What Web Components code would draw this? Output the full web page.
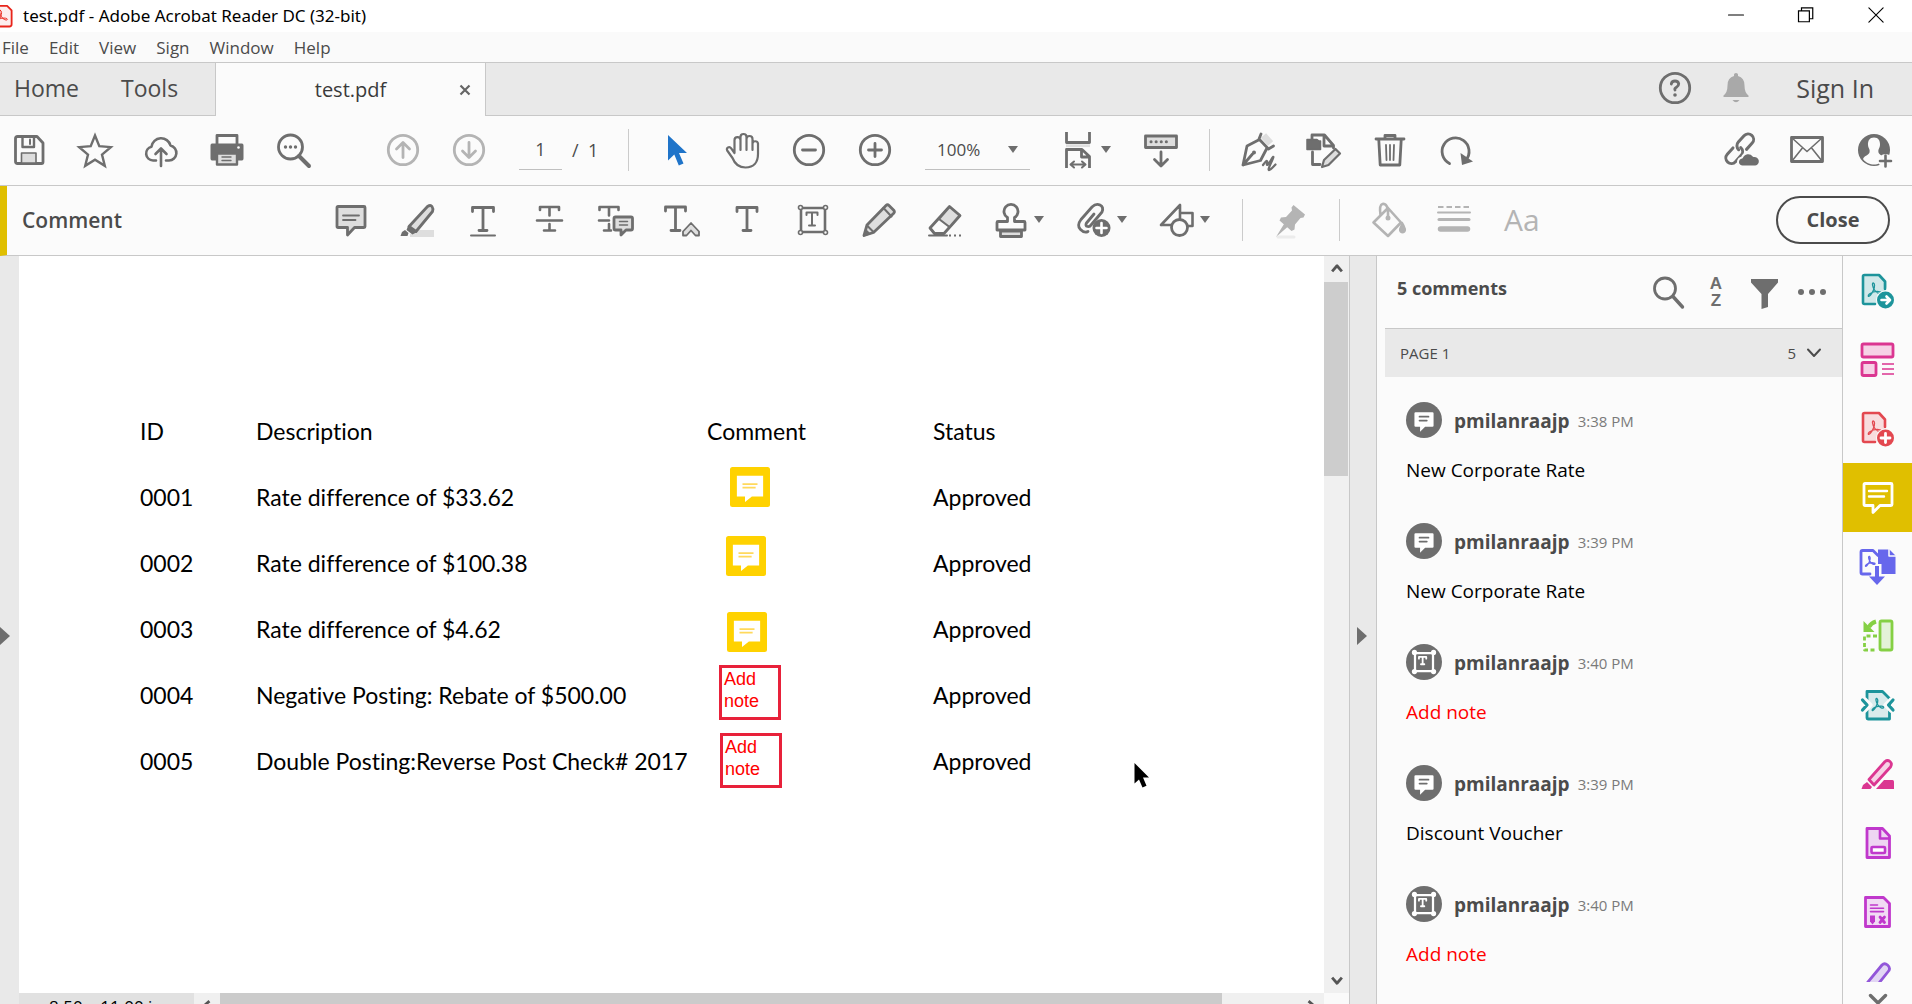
<!DOCTYPE html>
<html lang="en">
<head>
<meta charset="utf-8">
<title>test.pdf - Adobe Acrobat Reader DC (32-bit)</title>
<style>
  html, body { margin: 0; height: 100%; overflow: hidden; }
  body { font-family: "Open Sans", "Noto Sans", sans-serif; color: #4b4b4b; background: #fff; }
</style>
</head>
<body>
<reader-app></reader-app>
<script>
const BASE = `
  *, *::before { box-sizing: border-box; }
  button { font: inherit; color: inherit; background: none; border: 0; padding: 0; margin: 0; display: flex; align-items: center; }
  ul { list-style: none; margin: 0; padding: 0; }
  a { color: inherit; text-decoration: none; }
`;
const define = (name, css, html) => customElements.define(name, class extends HTMLElement {
  constructor() {
    super();
    this.attachShadow({ mode: "open" }).innerHTML = `<style>${BASE}${css}</style>${html}`;
  }
});

/* Icon set: 32-unit artboard, drawn in currentColor; --tint is the soft fill. */
const T = (x, y, w, h, s = 2.4) =>
  `<path d="M${x} ${y + 4}v-4h${w}v4M${x + w / 2} ${y}v${h}M${x + w / 2 - 4} ${y + h}h8" stroke-width="${s}"/>`;
const A = (x, y, k = 1) =>
  `<path transform="translate(${x} ${y}) scale(${k})" stroke-width="${1.3 / k}" d="M6.500 .5C4.800 0 5.300 4 7.500 7.500S13.500 12 14 10.500 10 8.500 6.500 9.500 .8 12.700 1.300 13.700 5 11.500 6.500 7.500 8 1.500 6.500 .5z"/>`;
const FRAME = `<path d="M4 4h24v24H4z" stroke-width="2.600"/>
  <g fill="var(--hole,#fbfbfb)" stroke-width="1.600"><circle cx="3.500" cy="3.500" r="2"/><circle cx="28.500" cy="3.500" r="2"/><circle cx="3.500" cy="28.500" r="2"/><circle cx="28.500" cy="28.500" r="2"/></g>`;
const ICONS = {
  save: `<path d="M4.500 2.500H24l6 6.500v19q0 1.500-1.500 1.500h-24q-2 0-2-2v-23q0-2 2-2z"/><path d="M9.500 3v10H21V3" stroke-width="2.400"/><path d="M17 5.500v4.500" stroke-width="2"/><path d="M8.500 19h14.500v10H8.500z" fill="var(--tint)" stroke-width="1.600"/>`,
  star: `<path d="M16 1.500l4.300 10.700 11.500.9-8.800 7.500 2.800 11.200L16 25.700 6.200 31.800 9 20.600.2 13.100l11.500-.9z" stroke-width="2.400" stroke-linejoin="miter"/>`,
  cloud: `<path d="M11 26.500H8A7 7 0 0 1 6.500 12.700 9.700 9.700 0 0 1 25.500 11.500 7.600 7.600 0 0 1 24 26.500h-3M16 32V15M10.500 20L16 14.500l5.500 5.500" stroke-width="2.600"/>`,
  print: `<path d="M6 10V1.500h20V10" /><path d="M1 9.500h30q1.500 0 1.500 2v13q0 2-1.500 2h-4V19H5v7.500H1q-1.500 0-1.500-2v-13q0-2 1.500-2z" fill="currentColor" stroke="none"/><path d="M6 19.500h20v11H6z" fill="var(--tint)" stroke-width="2.400"/><path d="M11 23h9M11 26.500h9" stroke-width="1.400"/><circle cx="27.500" cy="13.500" r="1.300" fill="#fff" stroke="none"/>`,
  find: `<circle cx="13.500" cy="13" r="12"/><path d="M22 22l10 10" stroke-width="4"/><g fill="currentColor" stroke="none"><circle cx="8.500" cy="13" r="1.700"/><circle cx="13.500" cy="13" r="1.700"/><circle cx="18.500" cy="13" r="1.700"/></g>`,
  up: `<circle cx="16" cy="16" r="14.700"/><path d="M16 23.500V9M9.500 15L16 8.500l6.500 6.500"/>`,
  down: `<circle cx="16" cy="16" r="14.700"/><path d="M16 8.500V23M9.500 17L16 23.500l6.500-6.500"/>`,
  arrow: `<path d="M7 1v25.500l6.300-6 4.500 11 4.700-2-4.500-10.500H26z" fill="currentColor" stroke="none"/>`,
  hand: `<path stroke-width="2.200" d="M7.500 19V6.200a3 3 0 0 1 6 0V16M13.500 8V3a3 3 0 0 1 6 0v13M19.500 5a3 3 0 0 1 6 0v11M25.500 9.500a2.800 2.800 0 0 1 5.500 0V20c0 8-4 13.500-12.500 13.500-7 0-10.500-3-13-9.500L.2 16.500c-1.500-3 2.300-4.500 4-2.200L7.500 19"/>`,
  minus: `<circle cx="16" cy="16" r="14.700"/><path d="M9.500 16h13"/>`,
  plus: `<circle cx="16" cy="16" r="14.700"/><path d="M9.500 16h13M16 9.500v13"/>`,
  fit: `<path d="M4.500-2V8.500h23V-2" stroke-linecap="butt"/><path d="M4 11.700h24" stroke="var(--tint)" stroke-linecap="butt"/><path d="M4.500 34V15.500H20l7.500 7V34M19.500 16v7h8" stroke-linecap="butt"/><path d="M9 30.500h14M12 27.500l-3.500 3 3.500 3M20 27.500l3.500 3-3.500 3" stroke-width="2"/>`,
  scroll: `<path d="M.5 2h31v11.500H.5z" fill="var(--tint)"/><path d="M6 7.700h20" stroke-dasharray=".1 5" stroke-width="3"/><path d="M16 18v13M9.500 25.500L16 32l6.500-6.500"/>`,
  sign: `<path d="M21.500 1.500l7 8" stroke="var(--tint)" stroke-width="7" stroke-linecap="butt"/><path d="M17.500 5.500L5 12 1 31l17.500-4.500L25 14M1 31l9.500-11M19 0l-2 5 9.500 10 5-3" stroke-width="2.800"/><circle cx="12" cy="18.500" r="2" fill="currentColor" stroke="none"/><path d="M21 31q5-7 4-2t4-3-.5 4 5 .500" stroke-width="2.200"/>`,
  edit: `<path d="M4 5V1h12.500l9 10.500V14M16 2v10h9M4.500 18v12.500H12"/><path d="M-1 5.500h10l2 1.500h1.500v8.500H-1z" fill="currentColor" stroke-width="1.500"/><path d="M14 33l2-7L27.500 15l4.500 4.500L20.500 31z" fill="var(--tint)" stroke-width="2.200"/>`,
  trash: `<path d="M2 5h28M11 4.500V1.500h10v3M4.800 6l1.400 25h19.600L27.200 6"/><path d="M12 11l.5 15M16 11v15M20 11l-.5 15" stroke-width="1.800"/>`,
  rotate: `<path d="M9.500 29.500A13.500 13.500 0 1 1 26 26"/><path d="M20.500 19l1.500 12 11-3.500z" fill="currentColor" stroke="none"/>`,
  link: `<g transform="rotate(-48 15 14)" stroke-width="3"><path d="M11 9.500H2.500a5.500 5.500 0 0 0 0 11H11a5.500 5.500 0 0 0 5.500-5.500"/><path d="M19 20.500h8.500a5.500 5.500 0 0 0 0-11H19a5.500 5.500 0 0 0-5.500 5.500"/></g><path d="M19 32.500a4.500 4.500 0 0 1-1-9 6.500 6.500 0 0 1 11.500-1.500 5.200 5.200 0 0 1 2 10.500z" fill="currentColor" stroke="#fbfbfb" stroke-width="2"/>`,
  mail: `<path d="M.5 3.500h31v24H.5z"/><path d="M1 4l15 13.500L31 4M1 27l10-12.500M31 27L21 14.500" stroke-width="1.600"/>`,
  person: `<circle cx="16" cy="16" r="16" fill="currentColor" stroke="none"/><path d="M16 3.500c-4.500 0-6.300 3.500-6 7.500.3 3.500 2.300 4 1.500 7.500-.5 2.500-5 3-6.500 6.500 3 4 7 5.500 11 5.500s8-1.500 10.500-5.500c-1-3.500-5.500-4-6-6.500-.6-3.500 1.200-4 1.500-7.500.3-4-1.500-7.500-6-7.500z" fill="#fbfbfb" stroke="none"/><circle cx="27.500" cy="27" r="7" fill="#fbfbfb" stroke="none"/><path d="M27.500 21.500v11M22 27h11" stroke-width="2.600"/>`,
  note: `<path d="M3 2.500h26q1 0 1 1v19q0 1-1 1H19.500l-7 7.500v-7.500H3q-1 0-1-1v-19q0-1 1-1z" fill="var(--tint)"/><path d="M8 11.500h16M8 16h12.500" stroke-width="1.800"/>`,
  highlight: `<path d="M9 33V30l9-4h15v7z" fill="var(--tint)" stroke="none"/><path d="M8 22.500L26.500 2.500q3-2 4.500 0t.5 5L15 27.500z" fill="var(--tint)"/><path d="M7 22l9 6-4.500 2.500L5.500 26zM1 28l3-2 3.500 3-1 3H-.500z" fill="currentColor" stroke="none"/>`,
  underline: T(5.500, 3.500, 21, 23, 2.800) + `<path d="M4 31.500h24" stroke-width="2"/>`,
  strike: `<path d="M7 6V3h19v3M16.500 3v8.500M16.500 20v6.500M11 26.500h11M4 16.500h25" stroke-width="2.600"/>`,
  replace: `<path d="M.500 6V3h19v3M10 3v8.500M10 20v6.500M5 26.500h7M0 16.500h10" stroke-width="2.600"/><path d="M16.500 13h15.500q1.500 0 1.500 1.500v10q0 1.500-1.500 1.500h-5l-5 5v-5h-5.500q-1.500 0-1.500-1.500v-10q0-1.500 1.500-1.500z" fill="var(--tint)"/><path d="M20.500 17.500h8M20.500 21h8" stroke-width="1.500"/>`,
  insert: `<path d="M.5 7V3h20v4M10.500 3v23M6 26.500h9" stroke-width="2.800"/><path d="M18 31.500v-4l8-8.500 8 8.500v4h-3.500L26 26.500l-4.500 5z" fill="var(--tint)" stroke-width="1.800"/>`,
  text: T(6, 3.500, 20, 23, 2.800),
  textbox: FRAME + `<path d="M9.500 11V8.500h11V11M15 8.500v13M12 21.500h6" stroke-width="2"/>`,
  pencil: `<path d="M1 31.500l3-10.500L23 1.500q1.500-1.500 3 0l5 5q1 1.500-.5 3L10.500 28.500z" fill="var(--tint)"/><path d="M20.500 4l8 8.500M4 21.500l6.500 6.500" stroke-width="2"/><path d="M0 33l3-8 5 5z" fill="currentColor" stroke="none"/>`,
  eraser: `<path d="M1 24L20.500 2.500l10.500 9L15 29.500H5.500z" fill="#fbfbfb"/><path d="M10 15L20.500 3l10 8.500L20.500 23z" fill="var(--tint)" stroke-width="2.200"/><path d="M0 31.500h18" stroke-width="2"/><path d="M20 31.500h12" stroke-width="2" stroke-dasharray="2 3" stroke-linecap="butt"/>`,
  stamp: `<path d="M3 17.500h9.500v-4a7 7 0 1 1 7 0v4H29q1 0 1 1V26H2v-7.500q0-1 1-1z"/><path d="M5.500 27h21v5.500h-21z" fill="var(--tint)"/>`,
  attach: `<path d="M16 10L8.500 19q-1.500 3 1 3.500t3.500-1.500L24 8q2-5-2-7t-8 2L3 15.500q-4.500 6-.5 10T10 27.500" stroke-width="2.800"/><circle cx="23.500" cy="24" r="9" fill="currentColor" stroke="none"/><path d="M18.500 24h10M23.500 19v10" stroke="#fff" stroke-width="2.600"/>`,
  shapes: `<path d="M0 21L19 1v13M0 21h11M19 9h12.500v13H27" stroke-width="2.600"/><circle cx="18.500" cy="23.500" r="8" fill="#fbfbfb"/>`,
  pin: `<path d="M18.500 1L30 10.500l-1.500 3-3 .5-5.500 6.500-.5 5-3 1.500-12-10.500 1.500-3 5-.5L17 6.500l-.5-3z M9 20l3.500 3L1 33z" fill="currentColor" stroke="none"/><path d="M3 33h16" stroke="#ececec" stroke-width="3"/>`,
  bucket: `<path d="M1.500 18.500L16 4l13 14.500-13 13.500zM16 14V5q-2-6-5.500-5T8.500 11" stroke-width="2.600"/><circle cx="16" cy="14" r="2.500" fill="currentColor" stroke="none"/><path d="M30.500 17.500q-5.500 8.500-2.500 11 2.500 2 5 0 3-2.500-2.500-11z" fill="currentColor" stroke="none"/>`,
  lines: `<path d="M0 3h32" stroke-width="1.800" stroke-dasharray="5.500 3" stroke-linecap="butt"/><path d="M0 8.500h32" stroke-width="2"/><path d="M1 15.500h30" stroke-width="3"/><path d="M2.500 25h27" stroke-width="5.500"/>`,
  help: `<circle cx="16" cy="16" r="14.700"/><path d="M12.300 12q.5-3 3.700-3t3.700 2.800q0 2.200-2.200 3.400T16 18" stroke-width="2.800"/><circle cx="16" cy="23" r="1.800" fill="currentColor" stroke="none"/>`,
  bell: `<path d="M14 2.500q0-1.500 2-1.500t2 1.500v1.500q6.500 1.500 6.500 9.500 0 7 4 10v1.500H3.500v-1.500q4-3 4-10 0-8 6.500-9.500zM12.500 28h7q-3.500 4.500-7 0z" fill="currentColor" stroke="none"/>`,
  search: `<circle cx="13" cy="12.500" r="10.500"/><path d="M21 20.500l9.500 10.500" stroke-width="3.400"/>`,
  filter: `<path d="M3 3h27v3.500L20 18v13l-6.500 2V18L3 6.500z" fill="currentColor" stroke="none"/>`,
  dots: `<g fill="currentColor" stroke="none"><circle cx="5" cy="16" r="3"/><circle cx="16" cy="16" r="3"/><circle cx="27" cy="16" r="3"/></g>`,
  chevron: `<path d="M10 12.500l6 6.500 6-6.500" stroke-width="2"/>`,
  arrowhead: `<path d="M10 13l6 7 6-7" stroke-width="3.400" stroke-linecap="butt"/>`,
  next: `<path d="M8.500 13.500l7.500 7.500 7.500-7.500" stroke-width="3.400"/>`,
  avatarNote: `<path d="M8.500 9h15q1 0 1 1v11q0 1-1 1H17l-4.500 4.500V22h-4q-1 0-1-1V10q0-1 1-1z" fill="#fff" stroke="none"/><path d="M12 13h8M12 16.500h6.500" stroke="#6e6e6e" stroke-width="1.500"/>`,
  avatarText: `<path d="M8 8h16v16H8z" stroke-width="2"/><g fill="#fff" stroke="none"><circle cx="7.500" cy="7.500" r="2.300"/><circle cx="24.500" cy="7.500" r="2.300"/><circle cx="7.500" cy="24.500" r="2.300"/><circle cx="24.500" cy="24.500" r="2.300"/></g><path d="M11.500 13v-1.500h6.500V13M14.800 11.500V18M13.300 18h3" stroke-width="1.600"/>`,
  sticky: `<path d="M0 2q0-2 2-2h28q2 0 2 2v28q0 2-2 2H2q-2 0-2-2z" fill="#ffd200" stroke="none"/><path d="M5.500 7h21v16.500h-9L12 28v-4.500H5.500z" fill="#fff" stroke="none"/><path d="M10 13.700h12M10 16.500h10.500" stroke="#ffd95c" stroke-width="1.300" stroke-linecap="butt"/>`,
  exportPdf: `<path d="M14.500 29H2.500q-1.300 0-1.300-1.300V1.500Q1.200 0 2.700 0H19l6 6.500V12" fill="var(--tint)" stroke="none"/><path d="M13 29H2.500q-1.500 0-1.500-1.500V1.500Q1 0 2.500 0H17l6 6.500V14" stroke-width="2.600"/>${A(5, 7.500)}<circle cx="23.500" cy="25" r="9.500" fill="#fbfbfb" stroke="none"/><circle cx="23.500" cy="25" r="8.500" fill="currentColor" stroke="none"/><path d="M19.500 25h8M24.500 21.500l3.500 3.500-3.500 3.500" stroke="#fff" stroke-width="2.600"/>`,
  createPdf: `<path d="M14.500 29H2.500q-1.300 0-1.300-1.300V1.500Q1.200 0 2.700 0H17l6 6.500V14l-8 15z" fill="var(--tint)" stroke="none"/><path d="M13 29H2.500q-1.500 0-1.500-1.500V1.500Q1 0 2.500 0H17l6 6.500V14" stroke-width="2.600"/>${A(5, 7.500)}<circle cx="23.500" cy="25" r="9.500" fill="#fbfbfb" stroke="none"/><circle cx="23.500" cy="25" r="8.500" fill="currentColor" stroke="none"/><path d="M19 25h9M23.500 20.500v9" stroke="#fff" stroke-width="2.800"/>`,
  organize: `<rect x="0" y="0" width="31" height="13" rx="1.500" fill="var(--tint)"/><rect x="0" y="18.500" width="14" height="13" rx="1.500" fill="var(--tint)"/><path d="M20 20h12M20 25h12M20 30h12" stroke-width="1.600" stroke-linecap="butt"/>`,
  comment: `<path d="M3 1.500h26q1 0 1 1v20q0 1-1 1H18l-7 7v-7H3q-1 0-1-1v-20q0-1 1-1z"/><path d="M7 9h18M7 14.500h15" stroke-width="2.400"/>`,
  combine: `<path d="M8 23H.5Q-1 23-1 21.500V1Q-1-.5.500-.5H11l5 5" /><path d="M16-1.500h11.500l6 6V23H19.500V13H16z" fill="currentColor" stroke="none"/><path d="M27-1.500V5h7" stroke="#fbfbfb" stroke-width="1.500"/>${A(2.500, 5, .75)}<path d="M15 15v11" stroke-width="4" stroke-linecap="butt"/><path d="M7 25.500h16L15 34z" fill="currentColor" stroke="none"/>`,
  compare: `<rect x="18" y="1" width="12" height="29" rx="1.500" fill="var(--tint)"/><path d="M15 16H2.500v14h12.500" stroke-dasharray="4 2.500" stroke-linecap="butt"/><path d="M14 1.500Q9 3 7 7" stroke-width="4" stroke-linecap="butt"/><path d="M1.500 1v11h11z" fill="currentColor" stroke="none"/>`,
  compress: `<path d="M5 2.500h15.500l7 7V30H6q-1 0-1-1z" fill="var(--tint)"/><path d="M3 10l6 6-6 6M29 10l-6 6 6 6" stroke="#fbfbfb" stroke-width="3.500"/><path d="M.5 11L5 16l-4.500 5M31 11l-4.500 5 4.500 5" stroke-width="3.200"/>${A(9, 9, .9)}`,
  fill: `<path d="M14 31l8-9h8.500q1.500 0 1.500 1.500V31z" fill="currentColor" stroke="none"/><path d="M7 21.500L23 3.500q2.500-2 5 0t.5 5.500L12 27z" fill="var(--tint)"/><path d="M1 27l4-3 5 5-1.500 2H-.5z" fill="currentColor" stroke="none"/>`,
  form: `<path d="M5 1.500h15.500l7 7.500v21.500H5z" fill="var(--tint)"/><path d="M18 2v9.500h9.500" stroke-width="2.600"/><rect x="9.500" y="20" width="13.500" height="6" rx="1" fill="#fff" stroke-width="2.600"/>`,
  rich: `<path d="M3.500 1.500h18l6 6V30.500h-24z" fill="var(--tint)"/><path d="M8.500 9h7M8.500 12.300h13M8.500 15.600h13" stroke-width="1.600"/><path d="M8 19.500h5v6l-2.500 3-2.500-3z" fill="currentColor" stroke="none"/><path d="M18 21l4.500 5.500M22.500 21L18 26.500"/>`,
  more: `<path d="M1 23L20 0q2.500-2.500 5.500 0t1.500 5.500L9 28z" fill="var(--tint)"/>`,
  pdf: `<path d="M2 2.500h19.500l6 6V27q0 3-3 3H2" fill="#fdeeee" stroke-width="2.400"/>${A(5, 8, 1.2)}`,
  min: `<path d="M6 16h20" stroke-width="1.500"/>`,
  restore: `<path d="M6 10.500h14.500V25H6zM10 10V6.500h15V21h-4" stroke-width="1.600" stroke-linejoin="miter"/>`,
  close: `<path d="M6.500 6.500l19 19M25.500 6.500l-19 19" stroke-width="1.500"/>`
};
customElements.define("ac-icon", class extends HTMLElement {
  connectedCallback() {
    if (this.shadowRoot) return;
    this.attachShadow({ mode: "open" }).innerHTML = `<style>
      :host { display: block; width: var(--size, 32px); height: var(--size, 32px); flex: none; }
      svg { display: block; width: 100%; height: 100%; overflow: visible; fill: none; stroke: currentColor; stroke-width: 2.8; stroke-linejoin: round; stroke-linecap: round; }
    </style><svg viewBox="0 0 32 32" aria-hidden="true">${ICONS[this.getAttribute("name")]}</svg>`;
  }
});

/* Toolbar button with an optional drop-down caret */
customElements.define("tool-button", class extends HTMLElement {
  connectedCallback() {
    if (this.shadowRoot) return;
    const caret = this.hasAttribute("menu") ? "<i></i>" : "";
    this.attachShadow({ mode: "open" }).innerHTML = `<style>${BASE}
      :host { display: block; flex: none; --tint: #dedede; }
      :host([off]) { color: #b4b4b4; }
      :host([active]) { color: #1f74c9; }
      button { gap: 7px; }
      i { border: 5px solid transparent; border-top: 7px solid #6e6e6e; border-bottom: 0; }
    </style><button aria-label="${this.getAttribute("label")}"><ac-icon name="${this.getAttribute("icon")}"></ac-icon>${caret}</button>`;
  }
});

define("title-bar", `
  :host { display: flex; align-items: center; justify-content: space-between; height: 32px; background: #fff; color: #000; font: 17px/30px "Noto Sans", sans-serif; }
  .name { display: flex; align-items: center; gap: 8px; }
  .name ac-icon { --size: 24px; color: #e8251b; margin-left: -9px; }
  .win { display: flex; gap: 46px; padding: 0 24px 2px 0; }
  .win ac-icon { --size: 24px; }
`, `<div class="name"><ac-icon name="pdf"></ac-icon><span>test.pdf - Adobe Acrobat Reader DC (32-bit)</span></div>
  <div class="win"><button aria-label="Minimize"><ac-icon name="min"></ac-icon></button><button aria-label="Restore"><ac-icon name="restore"></ac-icon></button><button aria-label="Close window"><ac-icon name="close"></ac-icon></button></div>`);

define("menu-bar", `
  :host { display: block; background: #fafafa; border-bottom: 1px solid #c8c8c8; }
  nav { display: flex; align-items: center; gap: 20px; height: 30px; padding-left: 2px; font-size: 17px; }
`, `<nav>${["File", "Edit", "View", "Sign", "Window", "Help"].map(t => `<button>${t}</button>`).join("")}</nav>`);

define("tab-strip", `
  :host { display: flex; align-items: stretch; height: 53px; background: #e9e9e9; font-size: 22px; }
  .side { display: flex; align-items: center; border-bottom: 1px solid #c8c8c8; padding-bottom: 2px; }
  .views { width: 215px; padding-left: 14px; gap: 42px; font-size: 23px; }
  .tab { display: grid; grid-template-columns: 40px 1fr 40px; align-items: center; width: 271px; background: #fbfbfb; border: solid #c8c8c8; border-width: 0 1px; font-size: 20px; color: #3a3a3a; }
  .tab span { text-align: center; }
  .tab svg { margin-left: 14px; }
  .account { flex: 1; justify-content: flex-end; gap: 29px; padding-right: 38px; font-size: 25px; }
  .account ac-icon { color: #6e6e6e; }
  .account .bell { color: #a9a9a9; margin-right: 15px; }
`, `<div class="side views"><button>Home</button><button>Tools</button></div>
  <div class="tab"><i></i><span>test.pdf</span><button aria-label="Close tab"><svg width="12" height="12" viewBox="0 0 12 12"><path d="M1.500 1.500l9 9M10.500 1.500l-9 9" stroke="#666" stroke-width="2.200"/></svg></button></div>
  <div class="side account"><button aria-label="Help"><ac-icon name="help"></ac-icon></button><button aria-label="Notifications"><ac-icon class="bell" name="bell"></ac-icon></button><button>Sign In</button></div>`);

const BAR = `
  :host { display: flex; align-items: center; gap: 34px; height: 70px; background: #fbfbfb; border-bottom: 1px solid #c8c8c8; color: #6e6e6e; padding: 0 22px 2px 13px; }
  hr { border: 0; width: 1px; height: 42px; background: #cbcbcb; margin: 0 -2px; flex: none; }
  .end { display: flex; gap: 35px; margin-left: auto; }
`;
const tb = (icon, label, attr = "") => `<tool-button icon="${icon}" label="${label}" ${attr}></tool-button>`;

define("main-toolbar", BAR + `
  :host { box-sizing: border-box; }
  .page { display: flex; align-items: center; gap: 10px; width: 77px; color: #4b4b4b; font-size: 18px; white-space: nowrap; }
  input { font: inherit; color: inherit; width: 43px; height: 40px; flex: none; border: 0; border-bottom: 1px solid #c0c0c0; background: none; text-align: center; padding: 0; outline: 0; }
  .zoom { display: flex; align-items: center; width: 103px; }
  .zoom::after { content: ""; border: 5px solid transparent; border-top: 7px solid #6e6e6e; border-bottom: 0; margin-left: -22px; pointer-events: none; }
  select { appearance: none; font: inherit; font-size: 17px; color: #4b4b4b; width: 105px; flex: none; height: 40px; border: 0; border-bottom: 1px solid #c0c0c0; border-radius: 0; background: none; padding: 0 0 0 12px; outline: 0; }
  .nav { display: flex; gap: 34px; margin-left: 44px; }
`, tb("save", "Save") + tb("star", "Star") + tb("cloud", "Upload") + tb("print", "Print") + tb("find", "Find") +
  `<div class="nav">${tb("up", "Previous page", "off")}${tb("down", "Next page", "off")}</div>
  <div class="page"><input aria-label="Page number" value="1"><span>/&nbsp; 1</span></div><hr>` +
  tb("arrow", "Select", "active") + tb("hand", "Pan") + tb("minus", "Zoom out") + tb("plus", "Zoom in") +
  `<div class="zoom"><select aria-label="Zoom level"><option>100%</option></select></div>` +
  tb("fit", "Fit width", "menu") + tb("scroll", "Page display") + "<hr>" +
  tb("sign", "Fill and sign") + tb("edit", "Edit PDF") + tb("trash", "Delete") + tb("rotate", "Rotate") +
  `<div class="end">${tb("link", "Share link")}${tb("mail", "Send by email")}${tb("person", "Add people")}</div>`);

define("comment-toolbar", BAR + `
  :host { box-sizing: border-box; border-left: 7px solid #e0bf00; padding-left: 15px; }
  h1 { font-size: 21px; line-height: 30px; font-weight: 600; color: #4b4b4b; margin: 0; width: 279px; }
  .aa { font-size: 30px; line-height: 32px; color: #b4b4b4; }
  .close { justify-content: center; width: 114px; height: 48px; border: 2px solid #4b4b4b; border-radius: 24px; font-size: 20px; font-weight: 700; color: #4b4b4b; }
`, `<h1>Comment</h1>` + tb("note", "Sticky note") + tb("highlight", "Highlight") + tb("underline", "Underline") + tb("strike", "Strikethrough") +
  tb("replace", "Replace text") + tb("insert", "Insert text") + tb("text", "Add text") + tb("textbox", "Text box") + tb("pencil", "Draw") + tb("eraser", "Erase") +
  tb("stamp", "Stamp", "menu") + tb("attach", "Attach", "menu") + tb("shapes", "Shapes", "menu") + "<hr>" + tb("pin", "Pin", "off") + "<hr>" +
  tb("bucket", "Colour", "off") + tb("lines", "Line width", "off") + `<button class="aa" aria-label="Text properties">Aa</button><div class="end"><button class="close">Close</button></div>`);

/* Annotations placed freely on the page */
define("page-note", `
  :host { box-sizing: border-box; position: absolute; left: var(--x); top: var(--y); width: 62px; height: 55px; border: 3px solid #e8213a; color: #f00; font: 18px/22px "Liberation Sans", Arial, sans-serif; padding: 0 2px; }
`, `<slot></slot>`);
define("page-sticky", `
  :host { position: absolute; left: var(--x); top: var(--y); --size: 40px; }
`, `<ac-icon name="sticky"></ac-icon>`);

const ROWS = [["0001", "Rate difference of $33.62"], ["0002", "Rate difference of $100.38"], ["0003", "Rate difference of $4.62"],
  ["0004", "Negative Posting: Rebate of $500.00"], ["0005", "Double Posting:Reverse Post Check# 2017"]];
define("pdf-view", `
  :host { display: grid; grid-template: minmax(0, 1fr) 11px / minmax(0, 1fr) 26px; background: #fff; overflow: hidden; }
  .page { position: relative; overflow: hidden; padding: 142px 0 0 121px; }
  table { border-collapse: collapse; table-layout: fixed; width: 1000px; color: #000; font: 23px/28px Lato, "Open Sans", sans-serif; font-variant-ligatures: none; }
  th, td { height: 66px; padding: 0; text-align: left; font-weight: 400; white-space: nowrap; }
  .cursor { position: absolute; left: 1115px; top: 507px; }
  .v { background: #f0f0f0; border-right: 1px solid #c8c8c8; display: flex; flex-direction: column; align-items: center; color: #555; }
  .v ac-icon { --size: 26px; }
  .v .thumb { width: 24px; height: 194px; background: #cdcdcd; margin-right: auto; }
  .v .down { margin-top: auto; }
  .up { transform: rotate(180deg); }
  .h { display: flex; overflow: hidden; background: #f0f0f0; color: #555; }
  .h .size { width: 175px; background: #e1e1e1; color: #000; font: 17px/28px "Open Sans", sans-serif; padding-left: 30px; }
  .h ac-icon { --size: 26px; }
  .h .thumb { flex: 1; max-width: 1002px; background: #cbcbcb; }
  .corner { background: #fafafa; border-right: 1px solid #c8c8c8; }
`, `<div class="page"><table><colgroup><col style="width:116px"><col style="width:451px"><col style="width:226px"><col></colgroup>
  <thead><tr><th>ID</th><th>Description</th><th>Comment</th><th>Status</th></tr></thead>
  <tbody>${ROWS.map(r => `<tr><td>${r[0]}</td><td>${r[1]}</td><td></td><td>Approved</td></tr>`).join("")}</tbody></table>
  <page-sticky style="--x:711px;--y:211px"></page-sticky><page-sticky style="--x:707px;--y:280px"></page-sticky><page-sticky style="--x:708px;--y:356px"></page-sticky>
  <page-note style="--x:700px;--y:409px">Add note</page-note><page-note style="--x:701px;--y:477px">Add note</page-note>
  <svg class="cursor" width="16" height="26" viewBox="0 0 16 26"><path d="M.5 0v20.500l4.500-4 3.500 8 4-1.800L9 14.500h6z" fill="#000"/></svg></div>
  <div class="v"><ac-icon class="up" name="arrowhead"></ac-icon><div class="thumb"></div><ac-icon class="down" name="arrowhead"></ac-icon></div>
  <div class="h"><div class="size">8.50 x 11.00 in</div><ac-icon style="transform:rotate(90deg)" name="arrowhead"></ac-icon><div class="thumb"></div><ac-icon style="margin-left:auto;transform:rotate(-90deg)" name="arrowhead"></ac-icon></div>
  <div class="corner"></div>`);

customElements.define("comment-item", class extends HTMLElement {
  connectedCallback() {
    if (this.shadowRoot) return;
    this.attachShadow({ mode: "open" }).innerHTML = `<style>${BASE}
      :host { display: block; height: 121px; padding-left: 21px; }
      header { display: flex; align-items: center; height: 36px; }
      .avatar { --size: 36px; border-radius: 50%; background: #6e6e6e; color: #fff; }
      b { font-size: 19px; line-height: 28px; color: #4b4b4b; margin: 2px 8px 0 12px; }
      time { font-size: 15px; line-height: 24px; color: #7a7a7a; padding-top: 2px; }
      p { margin: 18px 0 0; font-size: 19px; line-height: 28px; color: #000; }
      :host([kind=avatarText]) p { color: #f00; }
    </style><header><ac-icon class="avatar" name="${this.getAttribute("kind")}"></ac-icon><b>pmilanraajp</b><time>${this.getAttribute("time")}</time></header><p><slot></slot></p>`;
  }
});

define("comments-panel", `
  :host { display: block; background: #fbfbfb; overflow: hidden; padding-left: 8px; border-right: 1px solid #c8c8c8; }
  .head { display: flex; align-items: center; height: 72px; padding: 0 14px 0 12px; color: #6e6e6e; }
  h2 { font-size: 18px; line-height: 26px; font-weight: 700; color: #4b4b4b; margin: 0 auto 8px 0; }
  .tools { display: flex; align-items: center; gap: 16px; }
  .az { width: 32px; height: 34px; flex-direction: column; justify-content: center; font: 700 17px/17px "Liberation Sans", Arial, sans-serif; }
  .group { display: flex; align-items: center; justify-content: space-between; width: 100%; height: 49px; background: #e9e9e9; border-top: 1px solid #c8c8c8; padding: 0 12px 0 15px; font-size: 15px; margin-bottom: 25px; }
  .count { display: flex; align-items: center; gap: 2px; }
`, `<div class="head"><h2>5 comments</h2><div class="tools"><button aria-label="Search"><ac-icon name="search"></ac-icon></button><button class="az" aria-label="Sort"><span>A</span><span>Z</span></button><button aria-label="Filter"><ac-icon name="filter"></ac-icon></button><button aria-label="More"><ac-icon name="dots"></ac-icon></button></div></div>
  <button class="group"><span>PAGE 1</span><span class="count">5 <ac-icon name="chevron"></ac-icon></span></button>
  <div class="list"><comment-item kind="avatarNote" time="3:38 PM">New Corporate Rate</comment-item><comment-item kind="avatarNote" time="3:39 PM">New Corporate Rate</comment-item><comment-item kind="avatarText" time="3:40 PM">Add note</comment-item><comment-item kind="avatarNote" time="3:39 PM">Discount Voucher</comment-item><comment-item kind="avatarText" time="3:40 PM">Add note</comment-item></div>`);

const RAIL = [["exportPdf", "#1d949b", "#d0e8e9"], ["organize", "#db3691", "#f6d2e6"], ["createPdf", "#e34850", "#f8dcde"], ["comment", "#fff", "none"],
  ["combine", "#6767ec", "#dcdcf8"], ["compare", "#85d044", "#e4f2d8"], ["compress", "#1d949b", "#d9ebec"], ["fill", "#db3691", "#f6d2e6"],
  ["form", "#c038cc", "#eed5f2"], ["rich", "#c038cc", "#f1daf4"], ["more", "#9256d9", "#e2d6f4"]];
define("tool-rail", `
  :host { display: flex; flex-direction: column; background: #fbfbfb; overflow: hidden; }
  .items { flex: 1; min-height: 0; overflow: hidden; }
  .items button { width: 100%; height: 69px; justify-content: center; }
  .items button:nth-child(4) { background: #e0bf00; }
  .next { flex: none; align-items: flex-start; justify-content: center; color: #6e6e6e; height: 22px; }
`, `<div class="items">${RAIL.map(r => `<button aria-label="${r[0]}" style="color:${r[1]};--tint:${r[2]}"><ac-icon name="${r[0]}"></ac-icon></button>`).join("")}</div>
  <button class="next" aria-label="More tools"><ac-icon name="next"></ac-icon></button>`);

define("pane-edge", `
  :host { display: flex; align-items: center; background: #e9e9e9; }
  i { border: 9px solid transparent; border-left: 10px solid #6e6e6e; border-right: 0; margin: 12px 0 0 var(--inset, 0px); }
`, `<button aria-label="Toggle pane"><i></i></button>`);

define("reader-app", `
  :host { display: flex; flex-direction: column; height: 100vh; }
  main { flex: 1; min-height: 0; display: grid; grid-template-columns: 19px minmax(0, 1fr) 27px 466px 69px; grid-template-rows: minmax(0, 1fr); }
  .split { --inset: 7px; border-right: 1px solid #c8c8c8; }
`, `<title-bar></title-bar><menu-bar></menu-bar><tab-strip></tab-strip><main-toolbar></main-toolbar><comment-toolbar></comment-toolbar>
  <main><pane-edge></pane-edge><pdf-view></pdf-view><pane-edge class="split"></pane-edge><comments-panel></comments-panel><tool-rail></tool-rail></main>`);
</script>
</body>
</html>
